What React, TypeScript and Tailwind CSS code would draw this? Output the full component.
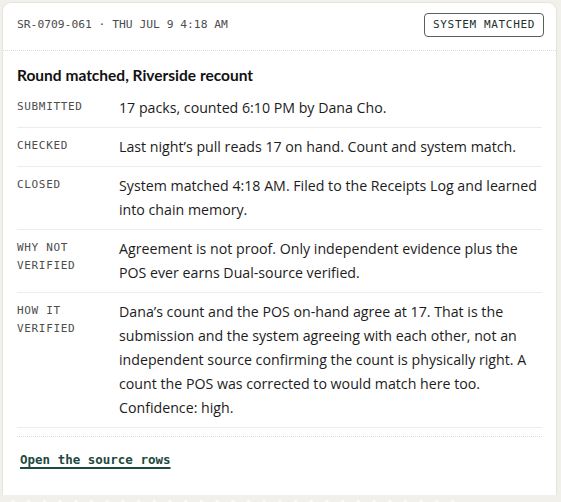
const mono = "font-['DejaVu_Sans_Mono','Liberation_Mono',monospace]";
const sans = "font-['Open_Sans','Noto_Sans',sans-serif]";

const rows = [
  { label: ['SUBMITTED'], text: '17 packs, counted 6:10 PM by Dana Cho.' },
  { label: ['CHECKED'], text: 'Last night\u2019s pull reads 17 on hand. Count and system match.' },
  { label: ['CLOSED'], text: 'System matched 4:18 AM. Filed to the Receipts Log and learned into chain memory.' },
  {
    label: ['WHY NOT', 'VERIFIED'],
    text: 'Agreement is not proof. Only independent evidence plus the POS ever earns Dual-source verified.',
  },
  {
    label: ['HOW IT', 'VERIFIED'],
    text: 'Dana\u2019s count and the POS on-hand agree at 17. That is the submission and the system agreeing with each other, not an independent source confirming the count is physically right. A count the POS was corrected to would match here too. Confidence: high.',
  },
];

// torn receipt edge under the card
function TornEdge() {
  const teeth = Array.from({ length: 29 }, (_, i) => 13 + i * 15.7);
  return (
    <svg width="460" height="14" viewBox="0 0 460 14" className="block">
      {teeth.map((x) => (
        <path key={x} d={`M${x - 5} 12 L${x - 1} 5.5 Q${x} 4 ${x + 1} 5.5 L${x + 5} 12 Z`} fill="#fbfbf8" />
      ))}
    </svg>
  );
}

export default function App() {
  return (
    <div className="min-h-[502px] bg-[#f1f0eb] pl-[2px] pt-[2px]">
      <div className="w-[555px] rounded-t-[9px] border border-b-0 border-[#e4e3de] bg-white">
        {/* header */}
        <div className="flex items-center justify-between border-b border-dotted border-[#dcdcd6] pl-[14px] pr-[12px] pt-[10px] pb-[13px]">
          <span className={`${mono} text-[11.3px] text-[#4d4d4d]`}>SR-0709-061 · THU JUL 9 4:18 AM</span>
          <span className={`${mono} rounded-[4px] border border-[#56605c] px-[8px] h-[24px] flex items-center text-[11px] tracking-[0.06em] text-[#23302c]`}>
            SYSTEM MATCHED
          </span>
        </div>

        <div className="px-[14px] pt-[13px]">
          <h2 className="font-['Lato','Open_Sans',sans-serif] text-[15.5px] font-bold leading-[22px] text-[#111] mb-[3px]">
            Round matched, Riverside recount
          </h2>

          {rows.map((r) => (
            <div key={r.label.join(' ')} className="grid grid-cols-[102px_1fr] border-b border-[#ececea] py-[7px]">
              <div className={`${mono} pt-[2px] text-[11px] leading-[18px] tracking-[0.06em] text-[#4d4d4d]`}>
                {r.label.map((l) => (
                  <div key={l}>{l}</div>
                ))}
              </div>
              <div className={`${sans} text-[14.2px] leading-[24px] text-[#1c1c1c]`}>{r.text}</div>
            </div>
          ))}

          <div className="mt-[8px] border-t border-dotted border-[#dcdcd6]" />

          <div className="pt-[9px] pb-[25px] pl-[3px]">
            <a href="#" className={`${mono} text-[12.5px] font-bold text-[#1f4a40] underline decoration-2 underline-offset-[3px]`}>
              Open the source rows
            </a>
          </div>
        </div>
      </div>
      <div className="-ml-[2px]">
        <TornEdge />
      </div>
    </div>
  );
}
